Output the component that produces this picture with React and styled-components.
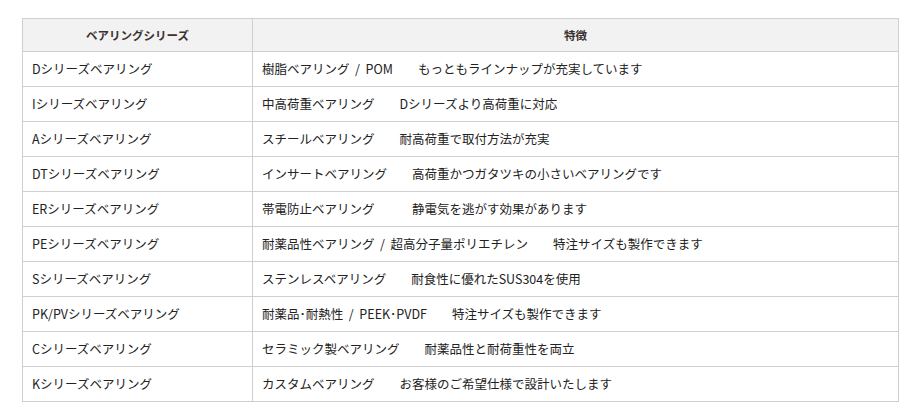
import React from 'react'
import styled, { createGlobalStyle } from 'styled-components'

const GlobalStyle = createGlobalStyle`
  html, body {
    margin: 0;
    padding: 0;
    background: #fff;
  }
  body {
    font-family: "Noto Sans CJK JP", "Noto Sans", sans-serif;
    color: #333;
  }
`

const Page = styled.div`
  padding: 18px 10px 0 22px;
`

const Table = styled.table`
  width: 877px;
  border-collapse: collapse;
  table-layout: fixed;
`

const HeadCell = styled.th`
  box-sizing: border-box;
  height: 33px;
  padding: 0 9px;
  background: #f2f2f2;
  border: 1px solid #cfcfcf;
  font-size: 11.5px;
  font-weight: 700;
  color: #3a3030;
  text-align: center;
  width: ${(props) => props.w || 'auto'};
`

const Cell = styled.td`
  height: 34px;
  padding: 0 9px;
  border: 1px solid #cfcfcf;
  font-size: 12.5px;
  line-height: 1;
  color: #222;
  white-space: pre;
`

const rows = [
  ['Dシリーズベアリング', '樹脂ベアリング  /  POM　　もっともラインナップが充実しています'],
  ['Iシリーズベアリング', '中高荷重ベアリング　　Dシリーズより高荷重に対応'],
  ['Aシリーズベアリング', 'スチールベアリング　　耐高荷重で取付方法が充実'],
  ['DTシリーズベアリング', 'インサートベアリング　　高荷重かつガタツキの小さいベアリングです'],
  ['ERシリーズベアリング', '帯電防止ベアリング　　　静電気を逃がす効果があります'],
  ['PEシリーズベアリング', '耐薬品性ベアリング  /  超高分子量ポリエチレン　　特注サイズも製作できます'],
  ['Sシリーズベアリング', 'ステンレスベアリング　　耐食性に優れたSUS304を使用'],
  ['PK/PVシリーズベアリング', '耐薬品･耐熱性  /  PEEK･PVDF　　特注サイズも製作できます'],
  ['Cシリーズベアリング', 'セラミック製ベアリング　　耐薬品性と耐荷重性を両立'],
  ['Kシリーズベアリング', 'カスタムベアリング　　お客様のご希望仕様で設計いたします'],
]

export default function App() {
  return (
    <>
      <GlobalStyle />
      <Page>
        <Table>
          <thead>
            <tr>
              <HeadCell w="230px">ベアリングシリーズ</HeadCell>
              <HeadCell>特徴</HeadCell>
            </tr>
          </thead>
          <tbody>
            {rows.map(([name, desc]) => (
              <tr key={name}>
                <Cell>{name}</Cell>
                <Cell>{desc}</Cell>
              </tr>
            ))}
          </tbody>
        </Table>
      </Page>
    </>
  )
}
